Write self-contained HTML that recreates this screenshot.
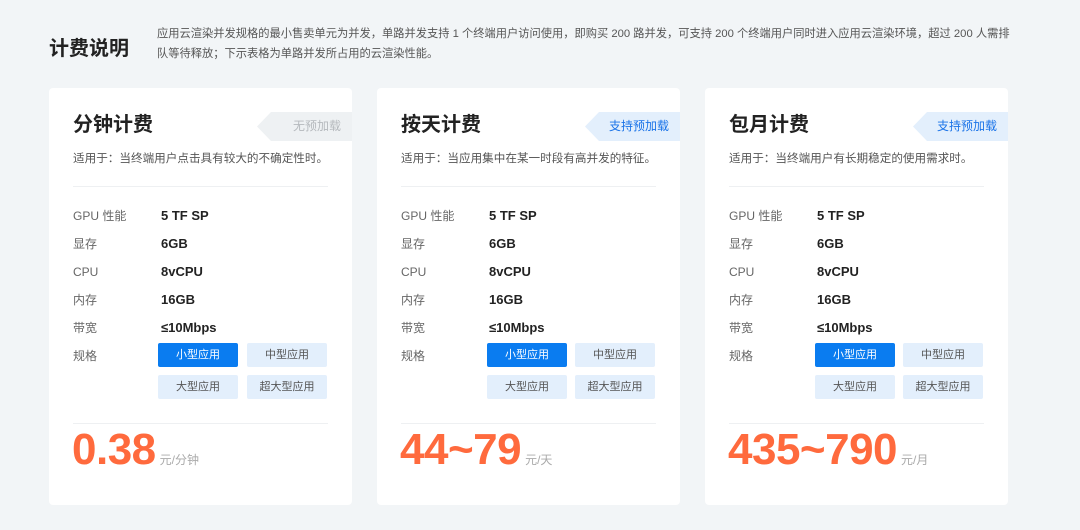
<!DOCTYPE html>
<html><head><meta charset="utf-8"><style>
*{margin:0;padding:0;box-sizing:border-box}
body{width:1080px;height:530px;background:#f2f5f7;font-family:"Liberation Sans","Noto Sans CJK SC",sans-serif;position:relative;overflow:hidden;color:#222}
.h{position:absolute;left:49px;top:32px;font-size:20px;font-weight:bold;color:#222}
.p{position:absolute;left:157px;top:24px;font-size:11.25px;line-height:20px;color:#555;white-space:nowrap}
.card{position:absolute;top:88px;width:303px;height:417px;background:#fff;border-radius:4px;overflow:hidden}
.t{position:absolute;left:24px;top:20px;font-size:20px;font-weight:bold;color:#222}
.tag{position:absolute;right:0;top:24px;width:95px;height:29px;font-size:12px;line-height:29px;text-align:right;padding-right:11px;background:#e3effc;color:#1a73e8;clip-path:polygon(14px 0,100% 0,100% 100%,14px 100%,0 50%)}
.tag.off{background:#eef1f3;color:#b5b9bd}
.d{position:absolute;left:24px;top:62px;font-size:11.6px;color:#555}
.hr{position:absolute;left:24px;width:255px;height:1px;background:#eef0f2}
.row{position:absolute;left:24px;font-size:12px;color:#666;height:20px;line-height:20px}
.row b{position:absolute;left:88px;font-size:13px;color:#222;white-space:nowrap}
.btn{position:absolute;width:80px;height:24px;line-height:24px;text-align:center;font-size:11px;color:#555;background:#e3effc;border-radius:2px}
.btn.on{background:#0a7cf0;color:#fff}
.pr{position:absolute;left:23px;top:337px;font-size:44px;font-weight:bold;color:#ff6a3d;white-space:nowrap;letter-spacing:-0.5px}
.pr span{font-size:12px;font-weight:normal;color:#aaa;margin-left:4px;letter-spacing:0}
</style></head><body>
<div class="h">计费说明</div>
<div class="p">应用云渲染并发规格的最小售卖单元为并发，单路并发支持 1 个终端用户访问使用，即购买 200 路并发，可支持 200 个终端用户同时进入应用云渲染环境，超过 200 人需排<br>队等待释放；下示表格为单路并发所占用的云渲染性能。</div>

<div class="card" style="left:49px">
<div class="t">分钟计费</div><div class="tag off">无预加载</div>
<div class="d">适用于：当终端用户点击具有较大的不确定性时。</div>
<div class="hr" style="top:98px"></div>
<div class="row" style="top:118px">GPU 性能<b>5 TF SP</b></div>
<div class="row" style="top:146px">显存<b>6GB</b></div>
<div class="row" style="top:174px">CPU<b>8vCPU</b></div>
<div class="row" style="top:202px">内存<b>16GB</b></div>
<div class="row" style="top:230px">带宽<b>≤10Mbps</b></div>
<div class="row" style="top:258px">规格</div>
<div class="btn on" style="left:109px;top:255px">小型应用</div><div class="btn" style="left:198px;top:255px">中型应用</div>
<div class="btn" style="left:109px;top:287px">大型应用</div><div class="btn" style="left:198px;top:287px">超大型应用</div>
<div class="hr" style="top:335px"></div>
<div class="pr">0.38<span>元/分钟</span></div>
</div>

<div class="card" style="left:377px">
<div class="t">按天计费</div><div class="tag">支持预加载</div>
<div class="d">适用于：当应用集中在某一时段有高并发的特征。</div>
<div class="hr" style="top:98px"></div>
<div class="row" style="top:118px">GPU 性能<b>5 TF SP</b></div>
<div class="row" style="top:146px">显存<b>6GB</b></div>
<div class="row" style="top:174px">CPU<b>8vCPU</b></div>
<div class="row" style="top:202px">内存<b>16GB</b></div>
<div class="row" style="top:230px">带宽<b>≤10Mbps</b></div>
<div class="row" style="top:258px">规格</div>
<div class="btn on" style="left:110px;top:255px">小型应用</div><div class="btn" style="left:198px;top:255px">中型应用</div>
<div class="btn" style="left:110px;top:287px">大型应用</div><div class="btn" style="left:198px;top:287px">超大型应用</div>
<div class="hr" style="top:335px"></div>
<div class="pr">44~79<span>元/天</span></div>
</div>

<div class="card" style="left:705px">
<div class="t">包月计费</div><div class="tag">支持预加载</div>
<div class="d">适用于：当终端用户有长期稳定的使用需求时。</div>
<div class="hr" style="top:98px"></div>
<div class="row" style="top:118px">GPU 性能<b>5 TF SP</b></div>
<div class="row" style="top:146px">显存<b>6GB</b></div>
<div class="row" style="top:174px">CPU<b>8vCPU</b></div>
<div class="row" style="top:202px">内存<b>16GB</b></div>
<div class="row" style="top:230px">带宽<b>≤10Mbps</b></div>
<div class="row" style="top:258px">规格</div>
<div class="btn on" style="left:110px;top:255px">小型应用</div><div class="btn" style="left:198px;top:255px">中型应用</div>
<div class="btn" style="left:110px;top:287px">大型应用</div><div class="btn" style="left:198px;top:287px">超大型应用</div>
<div class="hr" style="top:335px"></div>
<div class="pr">435~790<span>元/月</span></div>
</div>
</body></html>
